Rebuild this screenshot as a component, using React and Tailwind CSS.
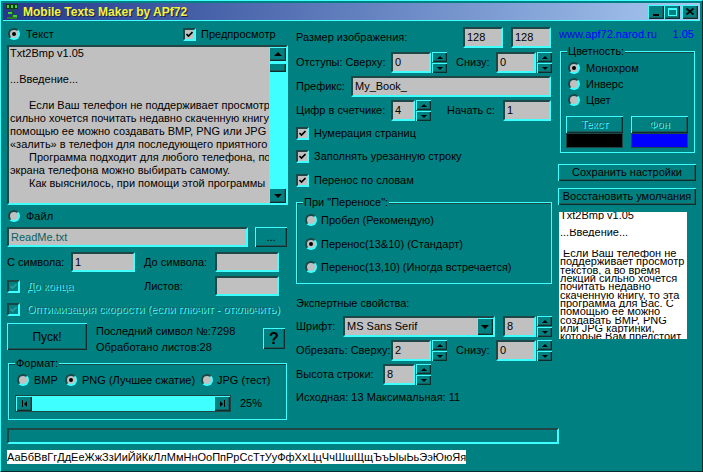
import React from "react";

const raised =
  "bg-[#008080] shadow-[inset_1px_1px_0_#40ffff,inset_-1px_-1px_0_#0b2e2e,inset_-2px_-2px_0_#1f5a5a]";
const sunken =
  "bg-[#c0c0c0] border-2 border-t-[#1e4646] border-l-[#1e4646] border-b-[#40ffff] border-r-[#40ffff]";
const dim = "text-[#1f6464] [text-shadow:1px_1px_0_#40ffff]";

function Radio({ on }) {
  return (
    <span className="w-[12px] h-[12px] shrink-0 rounded-full bg-[#c0c0c0] border-2 border-t-[#1e4646] border-l-[#1e4646] border-b-[#40ffff] border-r-[#40ffff] flex items-center justify-center">
      {on && <span className="w-[4px] h-[4px] rounded-full bg-black" />}
    </span>
  );
}

function Check({ off }) {
  return (
    <span
      className={`w-[13px] h-[13px] shrink-0 border-2 border-t-[#1e4646] border-l-[#1e4646] border-b-[#40ffff] border-r-[#40ffff] flex items-center justify-center ${
        off ? "bg-[#008080]" : "bg-[#c0c0c0]"
      }`}
    >
      <svg width="7" height="7" viewBox="0 0 7 7">
        <path d="M0.5 3 L2.5 5 L6.5 1" fill="none" stroke={off ? "#2f9a9a" : "#000"} strokeWidth="1.6" />
      </svg>
    </span>
  );
}

function Field({ w, v, className = "" }) {
  return (
    <div className={`${sunken} ${w} h-full flex items-center pl-[2px] whitespace-nowrap overflow-hidden ${className}`}>
      {v}
    </div>
  );
}

function Up() {
  return <span className="w-0 h-0 border-x-[3px] border-x-transparent border-b-[3px] border-b-black" />;
}
function Down() {
  return <span className="w-0 h-0 border-x-[3px] border-x-transparent border-t-[3px] border-t-black" />;
}

function Spin() {
  return (
    <div className="ml-[1px] w-[15px] h-full flex flex-col gap-[1px]">
      <div className={`${raised} flex-1 flex items-center justify-center`}>
        <Up />
      </div>
      <div className={`${raised} flex-1 flex items-center justify-center`}>
        <Down />
      </div>
    </div>
  );
}

function Group({ title, className, children }) {
  return (
    <div className={`relative border border-[#40ffff] shadow-[inset_1px_1px_0_#1e4646] ${className}`}>
      <span className="absolute -top-[8px] left-[6px] px-[1px] bg-[#008080] leading-[14px]">{title}</span>
      {children}
    </div>
  );
}

const intro = [
  { t: "Txt2Bmp v1.05" },
  { t: "" },
  { t: "...Введение..." },
  { t: "" },
  { t: "Если Ваш телефон не поддерживает просмотр", i: true },
  { t: "сильно хочется почитать недавно скаченную книгу" },
  { t: "помощью ее можно создавать BMP, PNG или JPG" },
  { t: "«залить» в телефон для последующего приятного" },
  { t: "Программа подходит для любого телефона, под", i: true },
  { t: "экрана телефона можно выбирать самому." },
  { t: "Как выяснилось, при помощи этой программы", i: true },
];

const preview = [
  "\u00a0Если Ваш телефон не",
  "поддерживает просмотр",
  "текстов, а во время",
  "лекций сильно хочется",
  "почитать недавно",
  "скаченную книгу, то эта",
  "программа для Вас. С",
  "помощью ее можно",
  "создавать BMP, PNG",
  "или JPG картинки,",
  "которые Вам предстоит",
];

function PLine({ t, className = "" }) {
  return (
    <div className={`h-[8.3px] overflow-hidden ${className}`}>
      <div className="leading-[11px] -mt-[2px] whitespace-nowrap">{t}</div>
    </div>
  );
}

function TitleBar() {
  return (
    <div className="h-[18px] flex items-center bg-linear-to-r from-[#26388a] to-[#a8c8f0] border-b border-[#40ffff]">
      <svg width="14" height="15" viewBox="0 0 14 15" className="ml-[2px]">
        <rect x="1" y="0" width="12" height="5" fill="#123a12" />
        <rect x="2" y="1" width="2" height="3" fill="#3fd23f" />
        <rect x="6" y="1" width="2" height="3" fill="#3fd23f" />
        <rect x="10" y="1" width="2" height="3" fill="#3fd23f" />
        <rect x="6" y="5" width="2" height="9" fill="#1a5a1a" />
        <rect x="3" y="8" width="4" height="2" fill="#3fd23f" />
        <rect x="8" y="11" width="4" height="2" fill="#3fd23f" />
        <rect x="2" y="13" width="10" height="2" fill="#2a7a2a" />
      </svg>
      <span className="ml-[4px] text-[12px] font-bold text-[#f4f43c] [text-shadow:1px_1px_0_#1a2050]">
        Mobile Texts Maker by APf72
      </span>
      <div className="ml-auto mr-[2px] flex items-center">
        <div className={`${raised} w-[16px] h-[14px] flex items-end justify-center pb-[3px]`}>
          <span className="w-[6px] h-[2px] bg-black" />
        </div>
        <div className={`${raised} w-[16px] h-[14px] flex items-center justify-center`}>
          <span className="w-[9px] h-[8px] border border-[#40ffff] border-t-2" />
        </div>
        <div className={`${raised} ml-[2px] w-[16px] h-[14px] flex items-center justify-center`}>
          <svg width="8" height="7" viewBox="0 0 8 7">
            <path d="M0.5 0.5 L7.5 6.5 M7.5 0.5 L0.5 6.5" stroke="#000" strokeWidth="1.8" />
          </svg>
        </div>
      </div>
    </div>
  );
}

function Left() {
  return (
    <div className="ml-[4px] w-[281px] flex flex-col">
      <div className="mt-[4px] h-[18px] flex items-center">
        <div className="w-[176px] flex items-center">
          <span className="ml-[1px]">
            <Radio on />
          </span>
          <span className="ml-[6px]">Текст</span>
        </div>
        <Check />
        <span className="ml-[5px]">Предпросмотр</span>
      </div>

      <div className={`${sunken} mt-[2px] h-[160px] flex`}>
        <div className="flex-1 overflow-hidden pl-[1px] leading-[13px]">
          {intro.map((l, k) => (
            <div key={k} className={`h-[13px] whitespace-nowrap ${l.i ? "pl-[19px]" : ""}`}>
              {l.t}
            </div>
          ))}
        </div>
        <div className="w-[17px] bg-[#40ffff] flex flex-col">
          <div className={`${raised} h-[14px] flex items-center justify-center`}>
            <span className="w-0 h-0 border-x-[4px] border-x-transparent border-b-[4px] border-b-black" />
          </div>
          <div className={`${raised} mt-[2px] h-[9px]`} />
          <div className="flex-1" />
          <div className={`${raised} h-[15px] flex items-center justify-center`}>
            <span className="w-0 h-0 border-x-[4px] border-x-transparent border-t-[4px] border-t-black" />
          </div>
        </div>
      </div>

      <div className="mt-[2px] h-[18px] flex items-center">
        <span className="ml-[1px]">
          <Radio />
        </span>
        <span className="ml-[6px]">Файл</span>
      </div>

      <div className="mt-[2px] h-[20px] flex">
        <Field w="w-[241px]" v="ReadMe.txt" className="text-[#0a6262]" />
        <div className={`${raised} ml-[7px] w-[32px] h-full flex items-center justify-center`}>...</div>
      </div>

      <div className="mt-[5px] h-[20px] flex items-center">
        <span className="w-[64px]">С символа:</span>
        <Field w="w-[64px]" v="1" />
        <span className="ml-[9px] w-[71px]">До символа:</span>
        <Field w="w-[64px]" v="" />
      </div>

      <div className="mt-[4px] h-[20px] flex items-center">
        <div className="w-[137px] flex items-center">
          <Check off />
          <span className={`ml-[7px] ${dim}`}>До конца</span>
        </div>
        <span className="w-[71px]">Листов:</span>
        <Field w="w-[64px]" v="" />
      </div>

      <div className="mt-[5px] h-[16px] flex items-center">
        <Check off />
        <span className={`ml-[7px] ${dim}`}>Оптимизация скорости (если глючит - отключить)</span>
      </div>

      <div className="mt-[6px] h-[27px] flex">
        <div className={`${raised} w-[80px] h-full flex items-center justify-center text-[12px]`}>Пуск!</div>
        <div className="ml-[9px] flex flex-col leading-[16px]">
          <span>Последний символ №:7298</span>
          <span>Обработано листов:28</span>
        </div>
        <div
          className={`${raised} ml-auto mr-[3px] mt-[5px] w-[22px] h-[21px] flex items-center justify-center text-[16px] font-bold`}
        >
          ?
        </div>
      </div>

      <Group title="Формат:" className="mt-[13px] ml-[1px] w-[279px] h-[57px]">
        <div className="mt-[8px] h-[16px] flex items-center">
          <div className="ml-[8px] w-[48px] flex items-center">
            <Radio />
            <span className="ml-[5px]">BMP</span>
          </div>
          <div className="w-[136px] flex items-center">
            <Radio on />
            <span className="ml-[5px]">PNG (Лучшее сжатие)</span>
          </div>
          <div className="flex items-center">
            <Radio />
            <span className="ml-[4px]">JPG (тест)</span>
          </div>
        </div>
        <div className="mt-[7px] h-[17px] flex items-center">
          <div className="ml-[6px] w-[216px] h-full flex bg-[#40ffff] border border-[#1e4646]">
            <div className={`${raised} w-[16px] h-full flex items-center justify-center`}>
              <span className="w-[1px] h-[7px] bg-black mr-[1px]" />
              <span className="w-0 h-0 border-y-[3px] border-y-transparent border-r-[3px] border-r-black" />
            </div>
            <div className="flex-1" />
            <div className={`${raised} w-[16px] h-full flex items-center justify-center`}>
              <span className="w-0 h-0 border-y-[3px] border-y-transparent border-l-[3px] border-l-black" />
              <span className="w-[1px] h-[7px] bg-black ml-[1px]" />
            </div>
          </div>
          <span className="ml-[9px]">25%</span>
        </div>
      </Group>
    </div>
  );
}

function Middle() {
  return (
    <div className="ml-[8px] w-[256px] flex flex-col">
      <div className="mt-[6px] h-[21px] flex items-center">
        <span className="w-[167px]">Размер изображения:</span>
        <Field w="w-[40px]" v="128" />
        <Field w="ml-[8px] w-[40px]" v="128" />
      </div>

      <div className="mt-[4px] h-[21px] flex items-center">
        <span className="w-[95px]">Отступы: Сверху:</span>
        <Field w="w-[40px]" v="0" />
        <Spin />
        <span className="ml-[9px] w-[40px]">Снизу:</span>
        <Field w="w-[40px]" v="0" />
        <Spin />
      </div>

      <div className="mt-[3px] h-[21px] flex items-center">
        <span className="w-[55px]">Префикс:</span>
        <Field w="w-[200px]" v="My_Book_" />
      </div>

      <div className="mt-[3px] h-[21px] flex items-center">
        <span className="w-[95px]">Цифр в счетчике:</span>
        <Field w="w-[24px]" v="4" />
        <Spin />
        <span className="ml-[16px] w-[56px]">Начать с:</span>
        <Field w="w-[48px]" v="1" />
      </div>

      <div className="mt-[4px] h-[16px] flex items-center">
        <Check />
        <span className="ml-[5px]">Нумерация страниц</span>
      </div>
      <div className="mt-[7px] h-[16px] flex items-center">
        <Check />
        <span className="ml-[5px]">Заполнять урезанную строку</span>
      </div>
      <div className="mt-[8px] h-[16px] flex items-center">
        <Check />
        <span className="ml-[5px]">Перенос по словам</span>
      </div>

      <Group title={"При \"Переносе\":"} className="mt-[14px] w-[256px] h-[82px]">
        <div className="mt-[9px] ml-[8px] h-[16px] flex items-center">
          <Radio />
          <span className="ml-[4px]">Пробел (Рекомендую)</span>
        </div>
        <div className="mt-[8px] ml-[8px] h-[16px] flex items-center">
          <Radio on />
          <span className="ml-[4px]">Перенос(13&amp;10) (Стандарт)</span>
        </div>
        <div className="mt-[7px] ml-[8px] h-[16px] flex items-center">
          <Radio />
          <span className="ml-[4px]">Перенос(13,10) (Иногда встречается)</span>
        </div>
      </Group>

      <div className="mt-[11px] h-[16px] flex items-center">Экспертные свойства:</div>

      <div className="mt-[5px] h-[21px] flex items-center">
        <span className="w-[47px]">Шрифт:</span>
        <div className={`${sunken} w-[152px] h-full flex items-center pl-[2px]`}>
          <span className="flex-1">MS Sans Serif</span>
          <div className={`${raised} w-[16px] h-[17px] flex items-center justify-center`}>
            <span className="w-0 h-0 border-x-[4px] border-x-transparent border-t-[4px] border-t-black" />
          </div>
        </div>
        <Field w="ml-[8px] w-[33px]" v="8" />
        <Spin />
      </div>

      <div className="mt-[3px] h-[21px] flex items-center">
        <span className="w-[95px]">Обрезать: Сверху:</span>
        <Field w="w-[40px]" v="2" />
        <Spin />
        <span className="ml-[9px] w-[40px]">Снизу:</span>
        <Field w="w-[40px]" v="0" />
        <Spin />
      </div>

      <div className="mt-[3px] h-[21px] flex items-center">
        <span className="w-[87px]">Высота строки:</span>
        <Field w="w-[32px]" v="8" />
        <Spin />
      </div>

      <div className="mt-[4px] h-[16px] flex items-center">Исходная: 13 Максимальная: 11</div>
    </div>
  );
}

function Right() {
  return (
    <div className="ml-[6px] w-[138px] flex flex-col">
      <div className="mt-[5px] h-[16px] flex items-center justify-between pl-[1px] pr-[2px] text-[#0000ff]">
        <span>www.apf72.narod.ru</span>
        <span>1.05</span>
      </div>

      <Group title="Цветность:" className="mt-[9px] ml-[2px] w-[135px] h-[102px]">
        <div className="mt-[8px] ml-[7px] h-[16px] flex items-center">
          <Radio on />
          <span className="ml-[6px]">Монохром</span>
        </div>
        <div className="ml-[7px] h-[16px] flex items-center">
          <Radio />
          <span className="ml-[6px]">Инверс</span>
        </div>
        <div className="ml-[7px] h-[16px] flex items-center">
          <Radio />
          <span className="ml-[6px]">Цвет</span>
        </div>
        <div className="mt-[8px] ml-[5px] flex gap-[8px]">
          <div className="w-[57px] flex flex-col">
            <div className={`${raised} h-[17px] flex items-center justify-center ${dim}`}>Текст</div>
            <div className="h-[15px] bg-black border border-[#1e4646]" />
          </div>
          <div className="w-[57px] flex flex-col">
            <div className={`${raised} h-[17px] flex items-center justify-center ${dim}`}>Фон</div>
            <div className="h-[15px] bg-[#0000ff] border border-[#1e4646]" />
          </div>
        </div>
      </Group>

      <div className={`${raised} mt-[11px] h-[17px] flex items-center justify-center`}>Сохранить настройки</div>
      <div className={`${raised} mt-[7px] h-[17px] flex items-center justify-center`}>Восстановить умолчания</div>

      <div className="mt-[7px] ml-[1px] w-[128px] h-[127px] bg-white overflow-hidden pl-[1px]">
        <PLine t="Txt2Bmp v1.05" />
        <div className="h-[8.3px]" />
        <PLine t="...Введение..." />
        <div className="h-[8.3px]" />
        {preview.map((l, k) => (
          <PLine key={k} t={l} className={k === 0 ? "mt-[5px]" : ""} />
        ))}
      </div>
    </div>
  );
}

export default function App() {
  return (
    <div className="w-[703px] h-[472px] bg-[#008080] border border-t-[#40ffff] border-l-[#40ffff] border-r-[#0a2a2a] border-b-[#0a2a2a] p-[2px] font-['Liberation_Sans',Arial,sans-serif] text-[11px] text-black overflow-hidden flex flex-col">
      <TitleBar />
      <div className="flex h-[403px] shrink-0">
        <Left />
        <Middle />
        <Right />
      </div>
      <div className="mt-[4px] ml-[4px] w-[552px] h-[16px] shrink-0 border-2 border-t-[#1e4646] border-l-[#1e4646] border-b-[#40ffff] border-r-[#40ffff]" />
      <div className="mt-[6px] ml-[4px] h-[14px] shrink-0 flex">
        <span className="bg-white text-[11px] leading-[14px] whitespace-nowrap">
          АаБбВвГгДдЕеЖжЗзИиЙйКкЛлМмНнОоПпРрСсТтУуФфХхЦцЧчШшЩщЪъЫыЬьЭэЮюЯя
        </span>
      </div>
    </div>
  );
}
